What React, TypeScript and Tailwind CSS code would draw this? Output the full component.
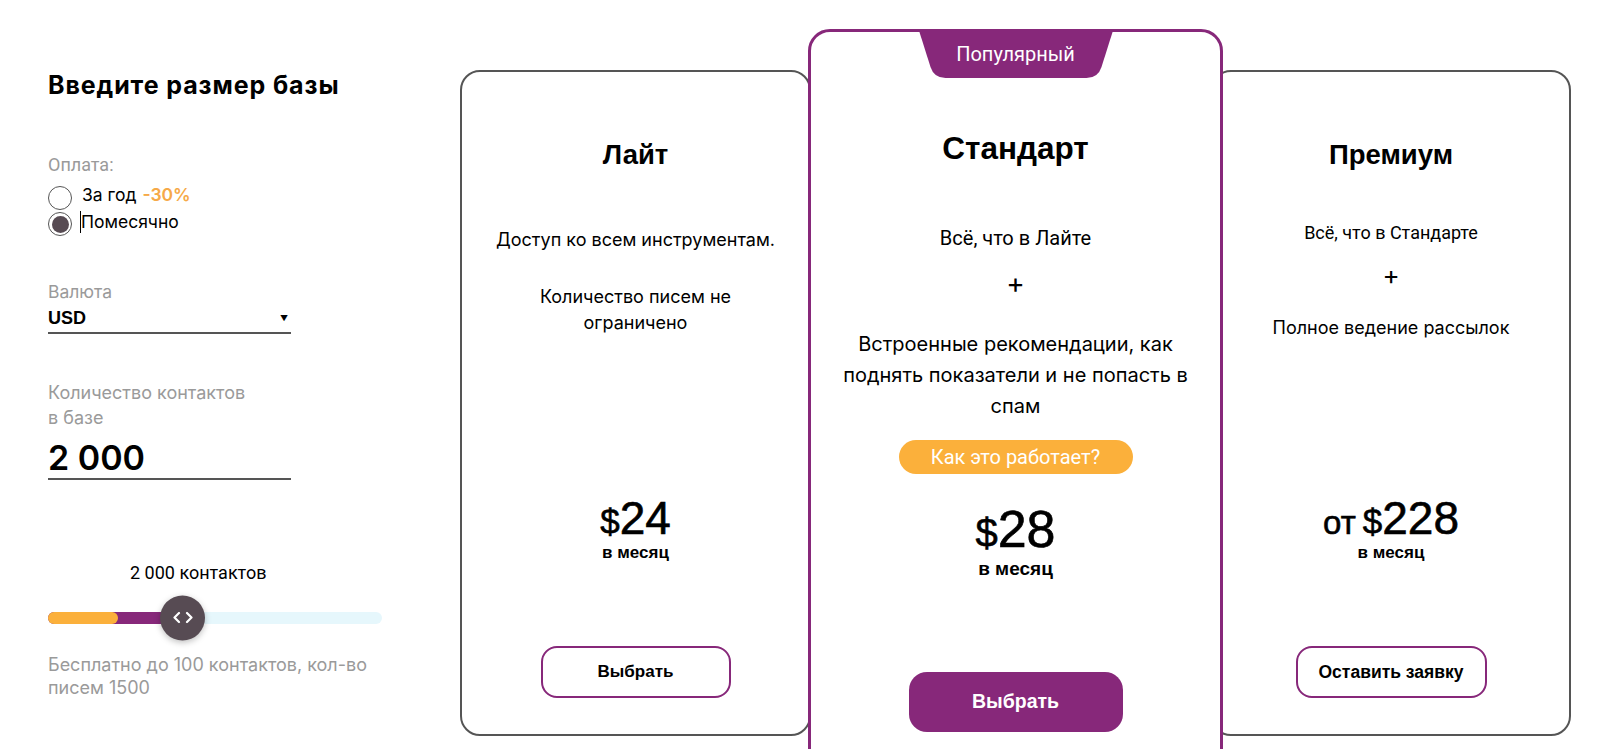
const purple = "#87287a";

function Radio({ checked }: { checked?: boolean }) {
  return (
    <span className="w-[24px] h-[24px] rounded-full border-[1.5px] border-[#555] bg-white flex items-center justify-center shrink-0">
      {checked && <span className="w-[17px] h-[17px] rounded-full bg-[#574b53]" />}
    </span>
  );
}

function Price({ value, from, big }: { value: string; from?: boolean; big?: boolean }) {
  return (
    <div className="flex items-baseline justify-center font-['Liberation_Sans',Arial,sans-serif] leading-none [-webkit-text-stroke:0.6px_black]">
      {from && <span className={big ? "text-[38px] mr-[8px]" : "text-[33px] mr-[7px]"}>от</span>}
      <span className={big ? "text-[40px]" : "text-[35px]"}>$</span>
      <span className={big ? "text-[52px]" : "text-[46px]"}>{value}</span>
    </div>
  );
}

function Thumb() {
  return (
    <div className="absolute left-[112px] top-1/2 -translate-y-1/2 w-[45px] h-[45px] rounded-full bg-[#574b53] shadow-[0_2px_6px_rgba(0,0,0,0.25)] flex items-center justify-center">
      <svg width="20" height="12" viewBox="0 0 20 12" fill="none" stroke="white" strokeWidth="2.2" strokeLinecap="round" strokeLinejoin="round">
        <polyline points="6,1.5 1.5,6 6,10.5" />
        <polyline points="14,1.5 18.5,6 14,10.5" />
      </svg>
    </div>
  );
}

export default function App() {
  return (
    <div className="h-[749px] w-full overflow-hidden bg-white flex font-['Inter',sans-serif] text-black">
      {/* settings column */}
      <div className="ml-[48px] w-[334px] pt-[69px] shrink-0">
        <h2 className="text-[25px] leading-[32px] font-bold tracking-[0.9px]">Введите размер базы</h2>

        <div className="mt-[52px] text-[18px] leading-[24px] text-[#9a9a9a] font-['Roboto',sans-serif]">Оплата:</div>
        <div className="mt-[9px] flex flex-col gap-[2px] text-[17.5px]">
          <label className="flex items-center h-[24px]">
            <Radio />
            <span className="ml-[10px] mt-[-5px]">За год</span>
            <span className="ml-[6px] mt-[-5px] font-semibold text-[#f6a948]">-30%</span>
          </label>
          <label className="flex items-center h-[24px]">
            <Radio checked />
            <span className="ml-[8px] w-px h-[22px] bg-black mt-[-4px]" />
            <span className="mt-[-4px]">Помесячно</span>
          </label>
        </div>

        <div className="mt-[44px] text-[17.5px] leading-[24px] text-[#9a9a9a]">Валюта</div>
        <div className="mt-[2px] w-[243px] flex items-center justify-between border-b-2 border-[#555] pb-[2px]">
          <span className="text-[18px] leading-[24px] font-bold font-['Liberation_Sans',Arial,sans-serif]">USD</span>
          <span className="text-[8px] leading-[24px] mr-[3px]">▼</span>
        </div>

        <div className="mt-[46px] text-[18px] leading-[25px] text-[#9a9a9a]">
          Количество контактов
          <br />в базе
        </div>
        <div className="mt-[8px] w-[243px] border-b-2 border-[#555] text-[34px] leading-[40px] font-semibold">2 000</div>

        <div className="mt-[81px] pl-[82px] text-[18px] leading-[24px] font-['Roboto',sans-serif]">2 000 контактов</div>
        <div className="mt-[10px] relative h-[45px] flex items-center">
          <div className="relative w-full h-[12px] rounded-full bg-[#e6f7fc]">
            <div className="absolute left-0 top-0 h-full w-[134px] rounded-full bg-[#87287a]" />
            <div className="absolute left-0 top-0 h-full w-[70px] rounded-full bg-[#fbb03b]" />
          </div>
          <Thumb />
        </div>
        <p className="mt-[13px] text-[18px] leading-[23px] text-[#9a9a9a]">
          Бесплатно до 100 контактов, кол-во писем 1500
        </p>
      </div>

      {/* plans */}
      <div className="ml-[78px] flex items-start">
        {/* Лайт */}
        <div className="mt-[70px] w-[351px] h-[666px] border-2 border-[#555] rounded-[20px] flex flex-col items-center text-center pt-[67px] pb-[36px] shrink-0">
          <h3 className="text-[27.5px] leading-[32px] font-bold font-['Liberation_Sans',Arial,sans-serif]">Лайт</h3>
          <p className="mt-[56px] text-[18px] leading-[26px]">Доступ ко всем инструментам.</p>
          <p className="mt-[31px] text-[18px] leading-[26px]">
            Количество писем не
            <br />
            ограничено
          </p>
          <div className="mt-[159px]">
            <Price value="24" />
          </div>
          <div className="mt-[2px] text-[17px] leading-[20px] font-bold font-['Liberation_Sans',Arial,sans-serif]">в месяц</div>
          <button className="mt-auto w-[190px] h-[52px] rounded-[16px] border-2 border-[#87287a] bg-white text-[17px] font-bold font-['Liberation_Sans',Arial,sans-serif]">
            Выбрать
          </button>
        </div>

        {/* Стандарт */}
        <div
          className="relative z-10 mt-[29px] -ml-[3px] w-[415px] h-[760px] border-[3px] rounded-[22px] bg-white flex flex-col items-center text-center pt-[98px] shrink-0"
          style={{ borderColor: purple }}
        >
          <div className="absolute top-[-3px] left-1/2 -translate-x-1/2 w-[195px] h-[49px] flex items-center justify-center">
            <svg className="absolute inset-0" width="195" height="49" viewBox="0 0 195 49">
              <path d="M0 0 H195 L183 38 Q179.5 49 168 49 H27 Q15.5 49 12 38 Z" fill={purple} />
            </svg>
            <span className="relative text-white text-[20px] leading-[24px] font-['Roboto',sans-serif]">Популярный</span>
          </div>
          <h3 className="text-[31.5px] leading-[36px] font-bold font-['Liberation_Sans',Arial,sans-serif]">Стандарт</h3>
          <p className="mt-[58px] text-[20px] leading-[28px] font-['Roboto',sans-serif]">Всё, что в Лайте</p>
          <div className="mt-[15px] text-[28px] leading-[32px]">+</div>
          <p className="mt-[30px] text-[20px] leading-[31px]">
            Встроенные рекомендации, как
            <br />
            поднять показатели и не попасть в
            <br />
            спам
          </p>
          <button className="mt-[18px] w-[234px] h-[34px] rounded-full bg-[#fbb03b] text-white text-[20px] leading-[24px] font-['Roboto',sans-serif]">
            Как это работает?
          </button>
          <div className="mt-[29px]">
            <Price value="28" big />
          </div>
          <div className="mt-[3px] text-[19px] leading-[22px] font-bold font-['Liberation_Sans',Arial,sans-serif]">в месяц</div>
          <button
            className="mt-[92px] w-[214px] h-[60px] rounded-[18px] text-white text-[19.5px] font-bold font-['Liberation_Sans',Arial,sans-serif]"
            style={{ backgroundColor: purple }}
          >
            Выбрать
          </button>
        </div>

        {/* Премиум */}
        <div className="mt-[70px] -ml-[12px] w-[360px] h-[666px] border-2 border-[#555] rounded-[20px] flex flex-col items-center text-center pt-[67px] pb-[36px] shrink-0">
          <h3 className="text-[27.5px] leading-[32px] font-bold font-['Liberation_Sans',Arial,sans-serif]">Премиум</h3>
          <p className="mt-[50px] text-[18px] leading-[24px] font-['Roboto',sans-serif]">Всё, что в Стандарте</p>
          <div className="mt-[15px] text-[26px] leading-[30px]">+</div>
          <p className="mt-[26px] text-[18px] leading-[24px]">Полное ведение рассылок</p>
          <div className="mt-[155px]">
            <Price value="228" from />
          </div>
          <div className="mt-[2px] text-[17px] leading-[20px] font-bold font-['Liberation_Sans',Arial,sans-serif]">в месяц</div>
          <button className="mt-auto w-[191px] h-[52px] rounded-[16px] border-2 border-[#87287a] bg-white text-[17.5px] font-bold font-['Liberation_Sans',Arial,sans-serif]">
            Оставить заявку
          </button>
        </div>
      </div>
    </div>
  );
}
